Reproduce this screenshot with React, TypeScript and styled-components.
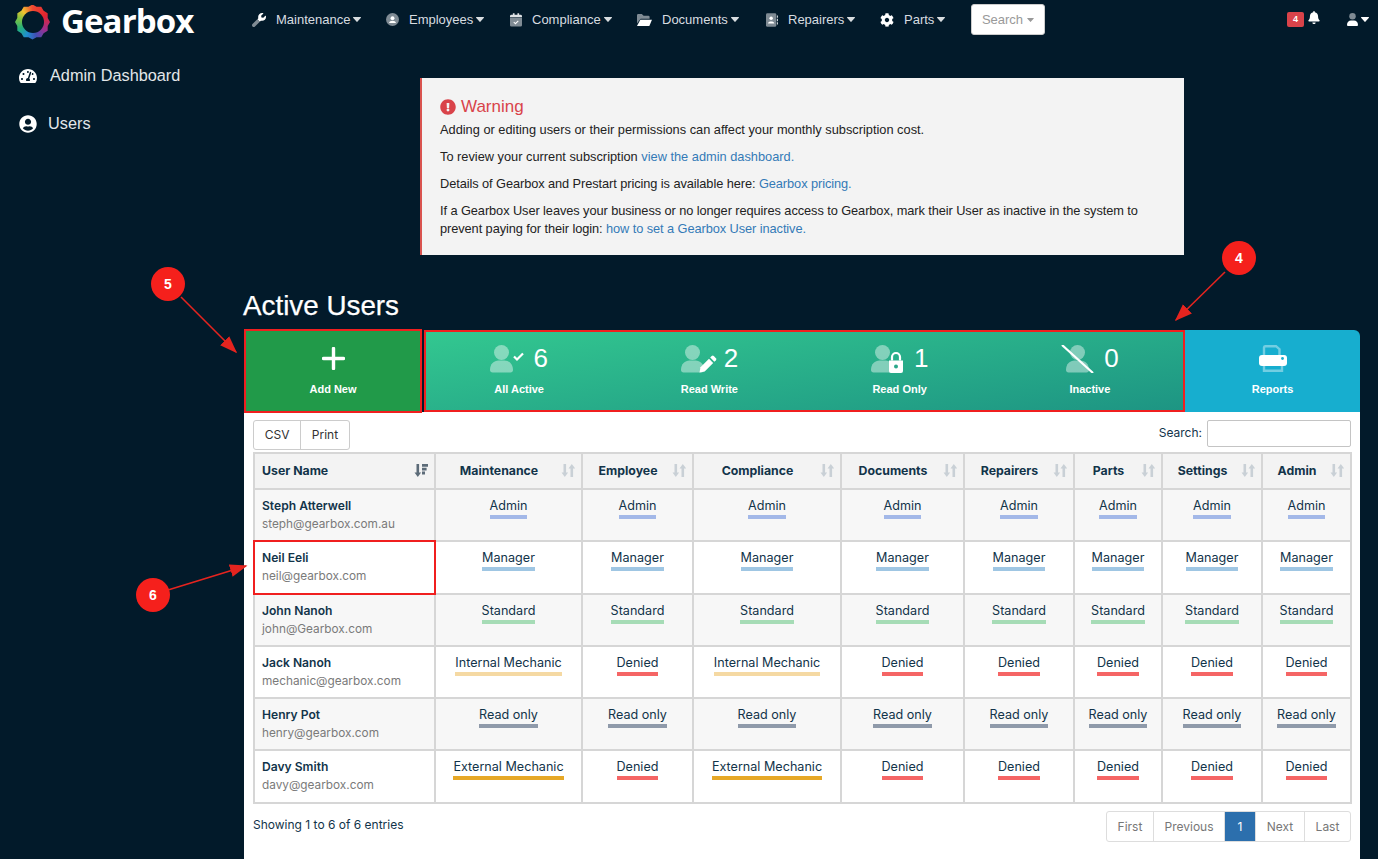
import React from 'react';
import styled, { createGlobalStyle } from 'styled-components';
import { FaBell, FaCog, FaExclamationCircle, FaTachometerAlt, FaUserCircle } from 'react-icons/fa';

type Access = 'Admin' | 'Manager' | 'Standard' | 'Internal Mechanic' | 'External Mechanic' | 'Read only' | 'Denied';

const accessColors: Record<Access, string> = {
  Admin: '#a3b8e8',
  Manager: '#9fc6e3',
  Standard: '#a6dcb6',
  'Internal Mechanic': '#f5d9a3',
  'External Mechanic': '#e6a827',
  'Read only': '#8f9aaa',
  Denied: '#f56565',
};

const columns = [
  { name: 'Maintenance', width: 147 },
  { name: 'Employee', width: 111 },
  { name: 'Compliance', width: 148 },
  { name: 'Documents', width: 123 },
  { name: 'Repairers', width: 110 },
  { name: 'Parts', width: 88 },
  { name: 'Settings', width: 100 },
  { name: 'Admin', width: 89 },
];

const same = (a: Access): Access[] => Array(8).fill(a);
const mechanic = (a: Access): Access[] => [a, 'Denied', a, 'Denied', 'Denied', 'Denied', 'Denied', 'Denied'];

const users = [
  { name: 'Steph Atterwell', email: 'steph@gearbox.com.au', access: same('Admin') },
  { name: 'Neil Eeli', email: 'neil@gearbox.com', access: same('Manager'), marked: true },
  { name: 'John Nanoh', email: 'john@Gearbox.com', access: same('Standard') },
  { name: 'Jack Nanoh', email: 'mechanic@gearbox.com', access: mechanic('Internal Mechanic') },
  { name: 'Henry Pot', email: 'henry@gearbox.com', access: same('Read only') },
  { name: 'Davy Smith', email: 'davy@gearbox.com', access: mechanic('External Mechanic') },
];

const GlobalStyle = createGlobalStyle`
  html, body {
    margin: 0;
    height: 100%;
    background: #021a2a;
    font-family: "Liberation Sans", Arial, sans-serif;
    overflow: hidden;
  }
`;

const Page = styled.div`
  position: relative;
  height: 859px;
  overflow: hidden;
`;

const TopBar = styled.header`
  height: 39px;
  display: flex;
  align-items: center;
`;

const Brand = styled.div`
  width: 252px;
  display: flex;
  align-items: center;
  gap: 11px;
  padding-left: 15px;
  box-sizing: border-box;
  margin-top: 5px;
`;

const gearShape = Array.from({ length: 24 }, (_, i) => {
  const angle = (i * Math.PI) / 12;
  const r = i % 2 === 0 ? 50 : 45;
  return `${(50 + r * Math.cos(angle)).toFixed(1)}% ${(50 + r * Math.sin(angle)).toFixed(1)}%`;
}).join(', ');

const LogoRing = styled.span`
  position: relative;
  width: 35px;
  height: 35px;
  flex: none;
  background: conic-gradient(#ef4a32, #e3242f 60deg, #9c2f8e 120deg, #3f4fb5 165deg, #1f8fd0 205deg, #25b07a 245deg, #7cc242 285deg, #f2c230 320deg, #ef4a32);
  clip-path: polygon(${gearShape});

  &::after {
    content: '';
    position: absolute;
    inset: 6.5px;
    border-radius: 50%;
    background: #021a2a;
  }
`;

const BrandName = styled.span`
  font-family: "Open Sans", sans-serif;
  font-weight: 700;
  font-size: 33px;
  line-height: 36px;
  letter-spacing: -0.9px;
  color: #fff;
  margin-top: -3px;
`;

const NavList = styled.nav`
  display: flex;
  align-items: center;
`;

const NavItem = styled.div<{ $width: number }>`
  width: ${({ $width }) => $width}px;
  display: flex;
  align-items: center;
  color: #d8dde0;
  font-size: 13px;
`;

const NavGlyph = styled.span<{ $width: number }>`
  width: ${({ $width }) => $width}px;
  display: flex;
  align-items: center;
  flex: none;
`;

const CaretMark = styled.svg<{ $small?: boolean }>`
  width: ${({ $small }) => ($small ? 7 : 8)}px;
  height: ${({ $small }) => ($small ? 4 : 5)}px;
  margin-left: ${({ $small }) => ($small ? 4 : 3)}px;
  fill: currentColor;
  flex: none;
`;

const SearchButton = styled.button`
  width: 74px;
  height: 31px;
  background: #fff;
  border: 1px solid #ccc;
  border-radius: 3px;
  color: #999;
  font: 13px "Liberation Sans", Arial, sans-serif;
  padding: 0;
  display: flex;
  align-items: center;
  justify-content: center;
`;

const TopRight = styled.div`
  margin-left: auto;
  display: flex;
  align-items: center;
  color: #fff;
  padding-right: 9px;
`;

const CountBadge = styled.span`
  width: 17px;
  height: 15px;
  border-radius: 2px;
  background: #d9434a;
  color: #fff;
  font-size: 9px;
  font-weight: 700;
  line-height: 15px;
  text-align: center;
`;

const BellIcon = styled(FaBell)`
  width: 12px;
  height: 13px;
  margin: -4px 27px 0 4px;
`;

const Columns = styled.div`
  display: flex;
`;

const Sidebar = styled.aside`
  width: 244px;
  flex: none;
  padding: 27px 0 0 19px;
  box-sizing: border-box;
  display: flex;
  flex-direction: column;
  gap: 29px;
`;

const SideLink = styled.a<{ $gap: number }>`
  display: flex;
  align-items: center;
  height: 19px;
  gap: ${({ $gap }) => $gap}px;
  color: #e3e7e9;
  font-size: 16.3px;

  svg {
    width: 18px;
    height: 18px;
    color: #fff;
  }
`;

const Main = styled.main`
  width: 1116px;
  padding-top: 39px;
`;

const Warning = styled.section`
  width: 764px;
  height: 177px;
  box-sizing: border-box;
  margin: 0 auto;
  padding: 18px 20px 0 18px;
  background: #f3f3f3;
  border-left: 2px solid #d9534f;
  color: #222;
  font-size: 12.8px;
  line-height: 18px;
`;

const WarningTitle = styled.h4`
  margin: 0 0 3px;
  display: flex;
  align-items: center;
  gap: 5px;
  height: 22px;
  font-size: 17px;
  font-weight: 400;
  color: #d9434a;

  svg {
    width: 16px;
    height: 16px;
  }
`;

const WarningText = styled.p<{ $tight?: boolean }>`
  margin: 0 0 9px;
  letter-spacing: ${({ $tight }) => ($tight ? '-0.08px' : '0')};
`;

const Link = styled.a`
  color: #337ab7;
`;

const Title = styled.h1`
  margin: 35px 0 9px -1px;
  height: 31px;
  font-size: 27.8px;
  line-height: 31px;
  font-weight: 400;
  color: #fff;
  -webkit-text-stroke: 0.25px #fff;
`;

const TileRow = styled.div`
  display: flex;
  height: 82px;
`;

const Tile = styled.div`
  display: flex;
  flex-direction: column;
  align-items: center;
  color: #fff;
  font-size: 11px;
  font-weight: 700;
`;

const AddTile = styled(Tile)`
  width: 178px;
  height: 84px;
  margin: -1px 2px -1px 0;
  box-sizing: border-box;
  border: 2px solid #f01f1f;
  background: #219a49;
`;

const ReportsTile = styled(Tile)`
  flex: 1;
  background: #17aecf;
  border-top-right-radius: 6px;
`;

const StatGroup = styled.div`
  width: 761px;
  height: 82px;
  outline: 2px solid #f01f1f;
  outline-offset: -2px;
  display: grid;
  grid-template-columns: repeat(4, 1fr);
  background: linear-gradient(172deg, #33c890, #1d9483);
`;

const TileHead = styled.div<{ $offset?: number }>`
  height: 44px;
  margin: ${({ $offset }) => $offset ?? 6}px 0 3px;
  display: flex;
  align-items: center;
  justify-content: center;
  font-size: 26px;
  font-weight: 400;
`;

const TileIcon = styled.svg`
  width: 37px;
  height: 28px;
  margin: 1px 6px 0 0;
`;

const TileLabel = styled.span`
  line-height: 13px;
`;

const Panel = styled.section`
  background: #fff;
  height: 447px;
  padding: 8px 9px 0 9px;
  box-sizing: border-box;
  font-family: Inter, sans-serif;
  color: #12344a;
`;

const Toolbar = styled.div`
  display: flex;
  justify-content: space-between;
  height: 32px;
`;

const ButtonGroup = styled.div`
  display: flex;
  height: 30px;
  border: 1px solid #ccc;
  border-radius: 3px;
  box-sizing: border-box;
`;

const ExportButton = styled.span`
  padding: 0 10.7px;
  font-size: 12px;
  line-height: 28px;
  color: #333;

  & + & {
    border-left: 1px solid #ccc;
  }
`;

const SearchLabel = styled.label`
  display: flex;
  align-items: flex-start;
  gap: 5px;
  font-size: 12px;
  line-height: 26px;
`;

const SearchInput = styled.input`
  width: 144px;
  height: 27px;
  box-sizing: border-box;
  border: 1px solid #c4c4c4;
  border-radius: 2px;
  background: #fff;
`;

const Table = styled.table`
  width: 1096px;
  table-layout: fixed;
  border-collapse: collapse;
  border: 2px solid #d6d6d6;
`;

const Head = styled.th<{ $left?: boolean }>`
  position: relative;
  height: 32px;
  padding: 0 19px 2px ${({ $left }) => ($left ? '7px' : '0')};
  background: #f3f3f3;
  border: 2px solid #d6d6d6;
  font-size: 12.3px;
  font-weight: 700;
  text-align: ${({ $left }) => ($left ? 'left' : 'center')};
`;

const SortMark = styled.svg<{ $active?: boolean }>`
  position: absolute;
  right: 6px;
  top: 10px;
  width: 14px;
  height: 13px;
  fill: ${({ $active }) => ($active ? '#5c6b78' : '#c9d0d6')};
`;

const Row = styled.tr<{ $odd: boolean }>`
  background: ${({ $odd }) => ($odd ? '#f7f7f7' : '#fff')};
`;

const UserCell = styled.td<{ $marked?: boolean }>`
  height: 52.3px;
  padding: 7px 7px 0;
  box-sizing: border-box;
  vertical-align: top;
  border: 2px solid #d6d6d6;
  outline: ${({ $marked }) => ($marked ? '2px solid #f01f1f' : 'none')};
  outline-offset: -1px;
`;

const UserName = styled.div`
  font-size: 12.1px;
  font-weight: 600;
  line-height: 18px;
`;

const UserEmail = styled.div`
  font-size: 11.8px;
  line-height: 18px;
  color: #7a7a7a;
`;

const AccessCell = styled.td`
  padding-top: 8px;
  vertical-align: top;
  text-align: center;
  border: 2px solid #d6d6d6;
`;

const AccessTag = styled.span<{ $color: string }>`
  display: inline-block;
  vertical-align: top;
  font-size: 12.6px;
  line-height: 16px;
  padding-bottom: 1px;
  border-bottom: 4px solid ${({ $color }) => $color};
`;

const Footer = styled.div`
  display: flex;
  justify-content: space-between;
  align-items: flex-start;
  margin-top: 7px;
  font-size: 12px;
`;

const FooterText = styled.span`
  line-height: 28px;
`;

const Pager = styled.div`
  display: flex;
  height: 31px;
  box-sizing: border-box;
  border: 1px solid #ddd;
  border-radius: 3px;
`;

const PageLink = styled.span<{ $active?: boolean; $width: number }>`
  width: ${({ $width }) => $width}px;
  box-sizing: border-box;
  text-align: center;
  line-height: 29px;
  font-size: 12px;
  color: ${({ $active }) => ($active ? '#fff' : '#777')};
  background: ${({ $active }) => ($active ? '#2c6fad' : 'transparent')};
  border-right: 1px solid #ddd;

  &:last-child {
    border-right: 0;
  }
`;

const Annotations = styled.svg`
  position: absolute;
  inset: 0;
  width: 1378px;
  height: 859px;
  pointer-events: none;
`;

const Callout = styled.span<{ $x: number; $y: number }>`
  position: absolute;
  left: ${({ $x }) => $x - 17}px;
  top: ${({ $y }) => $y - 17}px;
  width: 34px;
  height: 34px;
  border-radius: 50%;
  background: #f5201c;
  color: #fff;
  font-size: 14px;
  font-weight: 700;
  line-height: 34px;
  text-align: center;
`;

function Caret({ small }: { small?: boolean }) {
  return (
    <CaretMark viewBox="0 0 10 6" $small={small}>
      <path d="M.5 0h9a.5.5 0 0 1 .4.8L5.4 5.8a.5.5 0 0 1-.8 0L.1.8A.5.5 0 0 1 .5 0z" />
    </CaretMark>
  );
}

function WrenchGlyph() {
  return (
    <svg width="14" height="14" viewBox="0 0 512 512">
      <defs>
        <linearGradient id="wrenchFill" x1="0" y1="1" x2="1" y2="0">
          <stop offset="0.48" stopColor="#7f8b94" />
          <stop offset="0.48" stopColor="#fff" />
        </linearGradient>
      </defs>
      <path
        fill="url(#wrenchFill)"
        d="M507.73 109.1c-2.24-9.03-13.54-12.09-20.12-5.51l-74.36 74.36-67.88-11.31-11.31-67.88 74.36-74.36c6.62-6.62 3.43-17.9-5.66-20.16-47.38-11.74-99.55.91-136.58 37.93-39.64 39.64-50.55 97.1-34.05 147.2L18.74 402.76c-24.99 24.99-24.99 65.51 0 90.5 24.99 24.99 65.51 24.99 90.5 0l213.21-213.21c50.12 16.71 107.47 5.68 147.37-34.22 37.07-37.07 49.7-89.32 37.91-136.73z"
      />
    </svg>
  );
}

function PersonCircleGlyph() {
  return (
    <svg width="13" height="13" viewBox="0 0 24 24">
      <circle cx="12" cy="12" r="12" fill="#7f8b94" />
      <circle cx="12" cy="9.5" r="3.6" fill="#fff" />
      <path d="M5.5 18.5c.8-3 3.4-4.2 6.5-4.2s5.7 1.2 6.5 4.2z" fill="#fff" />
    </svg>
  );
}

function CalendarGlyph() {
  return (
    <svg width="12" height="14" viewBox="0 0 21 24">
      <path d="M0 8h21v13a2.5 2.5 0 0 1-2.5 2.5h-16A2.5 2.5 0 0 1 0 21z" fill="#7f8b94" />
      <path d="M2.5 3H5V0h3v3h5V0h3v3h2.5A2.5 2.5 0 0 1 21 5.5V7H0V5.5A2.5 2.5 0 0 1 2.5 3z" fill="#dfe3e6" />
      <path d="M6.5 15.5l3 3 5-5" fill="none" stroke="#fff" strokeWidth="1.8" />
    </svg>
  );
}

function FolderGlyph() {
  return (
    <svg width="15" height="12" viewBox="0 0 25 20">
      <path d="M0 2a2 2 0 0 1 2-2h6l3 3h8a2 2 0 0 1 2 2v3H6L0 16z" fill="#7f8b94" />
      <path d="M5.5 9.5H25L20.5 20H0z" fill="#fff" />
    </svg>
  );
}

function CardGlyph() {
  return (
    <svg width="12" height="14" viewBox="0 0 21 24">
      <rect width="18" height="24" rx="2.5" fill="#7f8b94" />
      <circle cx="9" cy="9" r="3" fill="#fff" />
      <path d="M3.5 18c.4-2.5 2.5-3.5 5.5-3.5s5.1 1 5.5 3.5z" fill="#fff" />
      <path d="M19 4h2v4h-2zM19 10h2v4h-2zM19 16h2v4h-2z" fill="#c5cbd0" />
    </svg>
  );
}

function AccountGlyph() {
  return (
    <svg width="11" height="13" viewBox="0 0 22 26">
      <circle cx="11" cy="6.5" r="6.5" fill="#7f8b94" />
      <path d="M0 24c0-6 3.5-9 8-9h6c4.5 0 8 3 8 9a2 2 0 0 1-2 2H2a2 2 0 0 1-2-2z" fill="#fff" />
    </svg>
  );
}

function PersonShape({ x = 0 }: { x?: number }) {
  return (
    <g transform={`translate(${x} 0)`} fill="#fff" opacity="0.42">
      <circle cx="11.5" cy="7.5" r="7.5" />
      <path d="M0 25c0-6 4-9.5 8.5-9.5h6c4.5 0 8.5 3.5 8.5 9.5 0 1.5-1 2.5-2.5 2.5h-18C1 27.5 0 26.5 0 25z" />
    </g>
  );
}

function AllActiveIcon() {
  return (
    <TileIcon viewBox="0 0 37 28">
      <PersonShape />
      <path d="M24 11.5l3 3 6-6" fill="none" stroke="#fff" strokeWidth="2.2" />
    </TileIcon>
  );
}

function ReadWriteIcon() {
  return (
    <TileIcon viewBox="0 0 37 28">
      <PersonShape />
      <path d="M18.5 27.5l1-5.2L28 13.8l4.2 4.2-8.5 8.5z" fill="#fff" />
      <path d="M29.2 12.6l1.5-1.5a1.5 1.5 0 0 1 2.1 0l2.1 2.100a1.5 1.5 0 0 1 0 2.1l-1.5 1.5z" fill="#fff" />
    </TileIcon>
  );
}

function ReadOnlyIcon() {
  return (
    <TileIcon viewBox="0 0 37 28">
      <PersonShape />
      <path d="M18 15.5h14V26a2 2 0 0 1-2 2H20a2 2 0 0 1-2-2z" fill="#fff" />
      <path d="M21 15.5V12a4 4 0 0 1 8 0v3.5" fill="none" stroke="#fff" strokeWidth="2.2" />
      <circle cx="25" cy="21.5" r="2" fill="#2aa88a" />
    </TileIcon>
  );
}

function InactiveIcon() {
  return (
    <TileIcon viewBox="0 0 37 28">
      <PersonShape x={5} />
      <path d="M1 0L32 28" stroke="#fff" strokeWidth="2.2" />
    </TileIcon>
  );
}

function PlusIcon() {
  return (
    <svg width="23" height="23" viewBox="0 0 23 23">
      <path d="M9.8 1.5a1.700 1.700 0 0 1 3.4 0v8.300h8.300a1.700 1.700 0 0 1 0 3.400h-8.300v8.300a1.700 1.700 0 0 1-3.400 0v-8.300H1.500a1.700 1.700 0 0 1 0-3.400h8.300z" fill="#fff" />
    </svg>
  );
}

function PrinterIcon() {
  return (
    <svg width="28" height="27" viewBox="0 0 28 27">
      <path d="M5 11V2.500A1.500 1.500 0 0 1 6.500 1.200H17l3.500 3V11" fill="none" stroke="#fff" strokeOpacity="0.4" strokeWidth="2.4" />
      <path d="M5 21v4.800h18V21" fill="none" stroke="#fff" strokeOpacity="0.4" strokeWidth="2.4" />
      <path d="M3 10h22a3 3 0 0 1 3 3v5a3 3 0 0 1-3 3H3a3 3 0 0 1-3-3v-5a3 3 0 0 1 3-3z" fill="#fff" />
      <circle cx="23.5" cy="13.5" r="1.4" fill="#17aecf" />
    </svg>
  );
}

function SortIcon({ active }: { active?: boolean }) {
  return (
    <SortMark viewBox="0 0 14 13" $active={active}>
      <path d="M.5 8.500h2V0h2.600v8.500h2L3.800 13z" />
      {active ? (
        <path d="M8 0h6v2.800H8zM8 3.800h4.600v2.800H8zM8 7.600h3v2.800H8z" />
      ) : (
        <path d="M7.500 4.500h2V13h2.600V4.500h2L10.800 0z" />
      )}
    </SortMark>
  );
}

const navItems = [
  { label: 'Maintenance', icon: <WrenchGlyph />, width: 134, glyph: 24 },
  { label: 'Employees', icon: <PersonCircleGlyph />, width: 124, glyph: 23 },
  { label: 'Compliance', icon: <CalendarGlyph />, width: 127, glyph: 22 },
  { label: 'Documents', icon: <FolderGlyph />, width: 129, glyph: 25 },
  { label: 'Repairers', icon: <CardGlyph />, width: 114, glyph: 22 },
  { label: 'Parts', icon: <FaCog color="#fff" size={14} />, width: 91, glyph: 24 },
];

const stats = [
  { label: 'All Active', count: 6, icon: <AllActiveIcon /> },
  { label: 'Read Write', count: 2, icon: <ReadWriteIcon /> },
  { label: 'Read Only', count: 1, icon: <ReadOnlyIcon /> },
  { label: 'Inactive', count: 0, icon: <InactiveIcon /> },
];

const pages = [
  { label: 'First', width: 47 },
  { label: 'Previous', width: 71 },
  { label: '1', width: 31, active: true },
  { label: 'Next', width: 49 },
  { label: 'Last', width: 45 },
];

export default function App() {
  return (
    <Page>
      <GlobalStyle />
      <TopBar>
        <Brand>
          <LogoRing />
          <BrandName>Gearbox</BrandName>
        </Brand>
        <NavList>
          {navItems.map((item) => (
            <NavItem key={item.label} $width={item.width}>
              <NavGlyph $width={item.glyph}>{item.icon}</NavGlyph>
              {item.label}
              <Caret />
            </NavItem>
          ))}
          <SearchButton>
            Search
            <Caret small />
          </SearchButton>
        </NavList>
        <TopRight>
          <CountBadge>4</CountBadge>
          <BellIcon />
          <AccountGlyph />
          <Caret />
        </TopRight>
      </TopBar>
      <Columns>
        <Sidebar>
          <SideLink $gap={13}>
            <FaTachometerAlt />
            Admin Dashboard
          </SideLink>
          <SideLink $gap={11}>
            <FaUserCircle />
            Users
          </SideLink>
        </Sidebar>
        <Main>
          <Warning>
            <WarningTitle>
              <FaExclamationCircle />
              Warning
            </WarningTitle>
            <WarningText>Adding or editing users or their permissions can affect your monthly subscription cost.</WarningText>
            <WarningText>
              To review your current subscription <Link>view the admin dashboard.</Link>
            </WarningText>
            <WarningText $tight>
              Details of Gearbox and Prestart pricing is available here: <Link>Gearbox pricing.</Link>
            </WarningText>
            <WarningText $tight>
              If a Gearbox User leaves your business or no longer requires access to Gearbox, mark their User as inactive in the system to
              prevent paying for their login: <Link>how to set a Gearbox User inactive.</Link>
            </WarningText>
          </Warning>
          <Title>Active Users</Title>
          <TileRow>
            <AddTile>
              <TileHead $offset={5}>
                <PlusIcon />
              </TileHead>
              <TileLabel>Add New</TileLabel>
            </AddTile>
            <StatGroup>
              {stats.map((s) => (
                <Tile key={s.label}>
                  <TileHead>
                    {s.icon}
                    {s.count}
                  </TileHead>
                  <TileLabel>{s.label}</TileLabel>
                </Tile>
              ))}
            </StatGroup>
            <ReportsTile>
              <TileHead>
                <PrinterIcon />
              </TileHead>
              <TileLabel>Reports</TileLabel>
            </ReportsTile>
          </TileRow>
          <Panel>
            <Toolbar>
              <ButtonGroup>
                <ExportButton>CSV</ExportButton>
                <ExportButton>Print</ExportButton>
              </ButtonGroup>
              <SearchLabel>
                Search:
                <SearchInput />
              </SearchLabel>
            </Toolbar>
            <Table>
              <colgroup>
                <col width={181} />
                {columns.map((c) => (
                  <col key={c.name} width={c.width} />
                ))}
              </colgroup>
              <thead>
                <tr>
                  <Head $left>
                    User Name
                    <SortIcon active />
                  </Head>
                  {columns.map((c) => (
                    <Head key={c.name}>
                      {c.name}
                      <SortIcon />
                    </Head>
                  ))}
                </tr>
              </thead>
              <tbody>
                {users.map((u, i) => (
                  <Row key={u.email} $odd={i % 2 === 0}>
                    <UserCell $marked={u.marked}>
                      <UserName>{u.name}</UserName>
                      <UserEmail>{u.email}</UserEmail>
                    </UserCell>
                    {u.access.map((a, j) => (
                      <AccessCell key={j}>
                        <AccessTag $color={accessColors[a]}>{a}</AccessTag>
                      </AccessCell>
                    ))}
                  </Row>
                ))}
              </tbody>
            </Table>
            <Footer>
              <FooterText>Showing 1 to 6 of 6 entries</FooterText>
              <Pager>
                {pages.map((p) => (
                  <PageLink key={p.label} $active={p.active} $width={p.width}>
                    {p.label}
                  </PageLink>
                ))}
              </Pager>
            </Footer>
          </Panel>
        </Main>
      </Columns>
      <Annotations viewBox="0 0 1378 859">
        <defs>
          <marker id="arrowHead" markerWidth="12" markerHeight="10" refX="10" refY="4" orient="auto">
            <path d="M0 0L11 4L0 8z" fill="#e5241f" />
          </marker>
        </defs>
        <path d="M181 297L236 352" stroke="#e5241f" strokeWidth="1.6" markerEnd="url(#arrowHead)" />
        <path d="M1225 272L1176 320" stroke="#e5241f" strokeWidth="1.6" markerEnd="url(#arrowHead)" />
        <path d="M168 590L246 566" stroke="#e5241f" strokeWidth="1.6" markerEnd="url(#arrowHead)" />
      </Annotations>
      <Callout $x={168} $y={284}>5</Callout>
      <Callout $x={1239} $y={258}>4</Callout>
      <Callout $x={153} $y={595}>6</Callout>
    </Page>
  );
}
